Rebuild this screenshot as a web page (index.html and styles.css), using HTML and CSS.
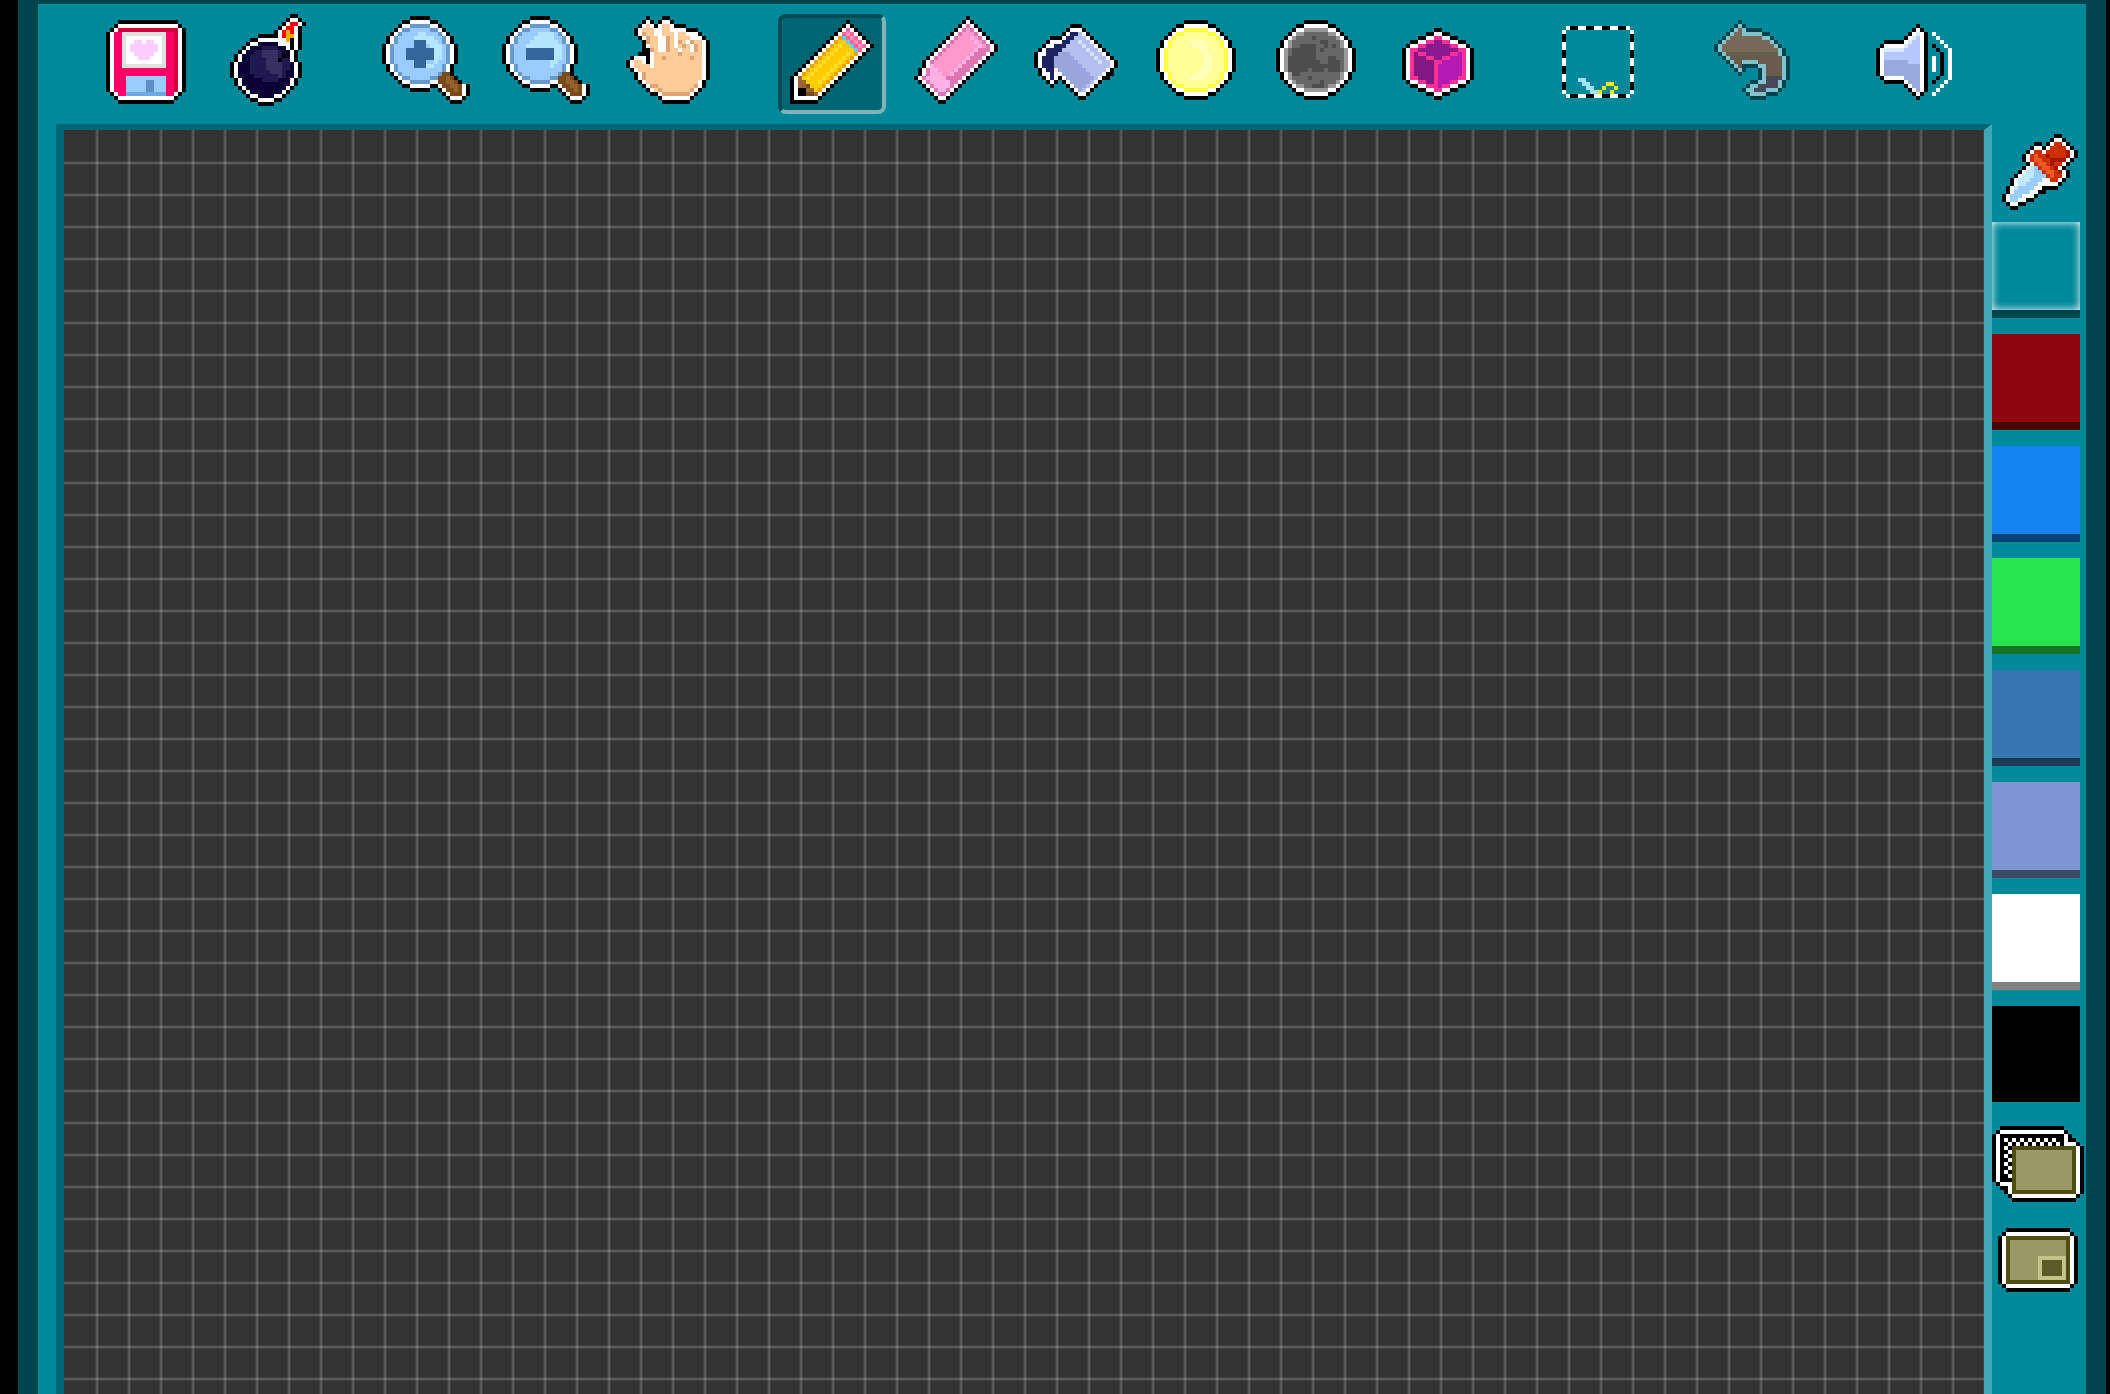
FILE: index.html
```html
<!DOCTYPE html>
<html lang="en">
<head>
<meta charset="utf-8">
<title>Pixel Paint</title>
<link rel="stylesheet" href="styles.css">
</head>
<body>
<main class="frame">
  <header class="toolbar">
    <div class="group">
      <button class="tool" type="button" aria-label="Save">
        <svg class="icon" viewBox="-3 -1 25 23">
          <path stroke="#000" d="M3 0h15M2 1h17M1 2h19M1 18h18M2 19h16M3 20h14"/>
          <rect y="2.5" width="20" height="15"/>
          <path stroke="#fff" d="M3 1h15M2 2h17M2 18h16M3 19h14"/>
          <rect x="1" y="2.5" width="18" height="15" fill="#fff"/>
          <rect x="2" y="2.5" width="16" height="15" fill="#f06"/>
          <path stroke="#f06" d="M3 18h14"/>
          <path stroke="#d10036" d="M3 2h15"/>
          <rect x="17" y="2.5" width="1" height="15" fill="#d10036"/>
          <rect x="4" y="2.5" width="11" height="9" fill="#dfe2df"/>
          <rect x="5" y="3.5" width="9" height="7" fill="#fff"/>
          <path stroke="#fcf" d="M7 5h2M10 5h2M6 6h7M6 7h7M7 8h5M8 9h3"/>
          <rect x="5" y="13.5" width="10" height="5" fill="#9cf"/>
          <path stroke="#70a8e0" d="M5 18h10"/>
          <rect x="10" y="14.5" width="2" height="3" fill="#5b90c4"/>
        </svg>
      </button>
      <button class="tool" type="button" aria-label="Clear">
        <svg class="icon" viewBox="-4 0.5 25 23">
          <path stroke="#000" d="M15 0h2M14 1h4M13 2h6M12 3h6M11 4h7M7 5h11M5 6h13M4 7h14M3 8h15M2 9h15M1 10h16M1 11h16M0 12h18M0 13h18M0 14h18M0 15h18M1 16h16M1 17h16M2 18h14M3 19h12M4 20h10M5 21h8M7 22h4"/>
          <path stroke="#fff" d="M15 1h2M14 2h4M13 3h4M12 4h5M12 5h5M7 6h10M5 7h12M4 8h13M3 9h13M2 10h14M2 11h14M1 12h16M1 13h16M1 14h16M1 15h16M2 16h14M2 17h14M3 18h12M4 19h10M5 20h8M7 21h4"/>
          <path stroke="#0b0033" d="M7 7h5M5 8h9M4 9h10M3 10h12M3 11h12M2 12h14M2 13h14M2 14h14M2 15h14M3 16h12M3 17h12M4 18h10M5 19h8M7 20h4"/>
          <path stroke="#1f1a4d" d="M8 8h4M6 9h7M5 10h9M5 11h10M5 12h10M5 13h10M5 14h9M6 15h8M8 16h4"/>
          <path stroke="#35305f" d="M8 9h4M8 10h4M9 11h4M9 12h4M9 13h4M10 14h3M12 15h1"/>
          <path stroke="#000" d="M14 9h1M13 10h1M12 11h1M15 6h1M15 7h1M15 8h1"/>
          <path stroke="red" d="M15 2h2M14 3h2M13 4h3M13 5h1"/>
          <path stroke="#fa0" d="M14 4h1M14 5h2M14 6h1"/>
        </svg>
      </button>
    </div>
    <div class="group">
      <button class="tool" type="button" aria-label="Zoom in">
        <svg class="icon" viewBox="-1 0 25 23">
          <path stroke="#000" d="M7 0h5M5 1h9M4 2h11M3 3h13M2 4h15M1 5h17M1 6h17M0 7h19M0 8h19M0 9h19M0 10h19M0 11h19M1 12h17M1 13h17M2 14h16M3 15h16M4 16h16M5 17h9M13 17h9M7 18h5M14 18h8M15 19h7M16 20h5M17 21h3"/>
          <path stroke="#fff" d="M7 1h5M5 2h9M4 3h11M3 4h13M2 5h15M2 6h15M1 7h17M1 8h17M1 9h17M1 10h17M1 11h17M2 12h15M2 13h15M3 14h14M4 15h14M5 16h14M7 17h5M14 17h7M15 18h6M16 19h5M17 20h3"/>
          <path stroke="#69c" d="M7 2h5M5 3h9M4 4h11M3 5h13M3 6h13M2 7h15M2 8h15M2 9h15M2 10h15M2 11h15M3 12h13M3 13h13M4 14h11M5 15h9M7 16h5"/>
          <path stroke="#9cf" d="M7 3h5M5 4h9M4 5h11M4 6h11M3 7h13M3 8h13M3 9h13M3 10h13M3 11h13M4 12h11M4 13h11M5 14h9M7 15h5"/>
          <path stroke="#b3e6ff" d="M9 4h2M8 5h5M11 6h3M12 7h3M13 8h2M13 9h2M13 10h2M13 11h1M11 12h2"/>
          <path stroke="#369" d="M8 6h3M8 7h3M6 8h7M6 9h7M6 10h7M8 11h3M8 12h3"/>
          <path stroke="#7a4a18" d="M15 14h2M14 15h4M14 16h5M15 17h5M16 18h4M17 19h3"/>
          <path stroke="#96622c" d="M16 15h1M16 16h2M17 17h2M18 18h1"/>
        </svg>
      </button>
      <button class="tool" type="button" aria-label="Zoom out">
        <svg class="icon" viewBox="-1 0 25 23">
          <path stroke="#000" d="M7 0h5M5 1h9M4 2h11M3 3h13M2 4h15M1 5h17M1 6h17M0 7h19M0 8h19M0 9h19M0 10h19M0 11h19M1 12h17M1 13h17M2 14h16M3 15h16M4 16h16M5 17h9M13 17h9M7 18h5M14 18h8M15 19h7M16 20h5M17 21h3"/>
          <path stroke="#fff" d="M7 1h5M5 2h9M4 3h11M3 4h13M2 5h15M2 6h15M1 7h17M1 8h17M1 9h17M1 10h17M1 11h17M2 12h15M2 13h15M3 14h14M4 15h14M5 16h14M7 17h5M14 17h7M15 18h6M16 19h5M17 20h3"/>
          <path stroke="#69c" d="M7 2h5M5 3h9M4 4h11M3 5h13M3 6h13M2 7h15M2 8h15M2 9h15M2 10h15M2 11h15M3 12h13M3 13h13M4 14h11M5 15h9M7 16h5"/>
          <path stroke="#9cf" d="M7 3h5M5 4h9M4 5h11M4 6h11M3 7h13M3 8h13M3 9h13M3 10h13M3 11h13M4 12h11M4 13h11M5 14h9M7 15h5"/>
          <path stroke="#b3e6ff" d="M9 4h4M8 5h5M7 6h7M6 7h9M13 8h2M13 9h2M13 10h2M12 11h2M12 12h1"/>
          <path stroke="#369" d="M6 8h7M6 9h7M6 10h7"/>
          <path stroke="#7a4a18" d="M15 14h2M14 15h4M14 16h5M15 17h5M16 18h4M17 19h3"/>
          <path stroke="#96622c" d="M16 15h1M16 16h2M17 17h2M18 18h1"/>
        </svg>
      </button>
      <button class="tool" type="button" aria-label="Pan">
        <svg class="icon" viewBox="-2 0 25 23">
          <path stroke="#000" d="M5 0h1M9 0h2M4 1h3M8 1h4M3 2h12M2 3h16M2 4h17M3 5h17M4 6h17M4 7h17M4 8h17M3 9h18M1 10h20M0 11h21M0 12h21M1 13h20M2 14h19M2 15h19M3 16h17M4 17h16M5 18h14M6 19h12M8 20h9M9 21h7"/>
          <path stroke="#fff" d="M5 1h1M9 1h2M4 2h3M8 2h4M3 3h12M3 4h15M4 5h15M5 6h15M5 7h15M6 8h14M6 9h14M2 10h3M6 10h14M1 11h4M6 11h14M1 12h19M2 13h18M3 14h17M3 15h17M4 16h15M5 17h14M6 18h12M8 19h9M9 20h7"/>
          <path stroke="#fc9" d="M5 2h1M9 2h2M4 3h3M9 3h2M4 4h3M9 4h3M13 4h2M5 5h3M10 5h2M13 5h3M5 6h3M10 6h2M13 6h2M16 6h3M6 7h2M10 7h2M13 7h3M17 7h2M6 8h2M10 8h3M14 8h2M17 8h2M7 9h12M7 10h12M2 11h2M7 11h12M2 12h4M7 12h12M3 13h16M4 14h15M4 15h15M5 16h13M6 17h12M7 18h10M9 19h7"/>
          <path stroke="#e0a472" d="M4 4h1M5 5h1M5 6h1M6 8h1M10 5h1M10 6h1M10 7h1M10 8h1M13 6h1M14 7h1M16 6h1M17 7h1M17 8h1M13 9h1M9 10h1M16 10h1M4 14h1M4 15h1M6 17h2M8 18h1M9 19h7M16 18h1M17 17h1"/>
        </svg>
      </button>
    </div>
    <div class="group">
      <button class="tool selected" type="button" aria-label="Pencil" aria-pressed="true">
        <svg class="icon" viewBox="-2 -1 25 23">
          <path stroke="#000" d="M14 0h1M13 1h3M12 2h5M11 3h7M10 4h9M9 5h11M8 6h13M7 7h13M6 8h13M5 9h13M4 10h13M3 11h13M2 12h13M1 13h13M0 14h13M0 15h12M0 16h11M0 17h10M0 18h9M0 19h8M0 20h7"/>
          <path stroke="#fff" d="M14 1h1M13 2h3M12 3h5M11 4h7M10 5h9M9 6h11M8 7h11M7 8h11M6 9h11M5 10h11M4 11h11M3 12h11M2 13h11M1 14h11M1 15h10M1 16h9M1 17h8M1 18h7M1 19h6"/>
          <path stroke="#fc0" d="M12 4h1M11 5h3M10 6h5M9 7h7M8 8h9M7 9h9M6 10h9M5 11h9M4 12h9M3 13h9M2 14h9M2 15h8M2 16h7M2 17h6M2 18h5"/>
          <path stroke="#e8a400" d="M12 4h1M11 5h1M10 6h1M9 7h1M8 8h1M7 9h1M6 10h1M5 11h1M4 12h1M3 13h1M16 8h1M15 9h1M14 10h1M13 11h1M12 12h1M11 13h1M10 14h1M9 15h1M8 16h1M7 17h1"/>
          <path stroke="#ffdc28" d="M12 6h1M11 7h1M10 8h1M9 9h1M8 10h1M7 11h1M6 12h1M5 13h1M4 14h1M14 8h1M13 9h1M12 10h1M11 11h1M10 12h1M9 13h1M8 14h1M7 15h1"/>
          <path stroke="#f69" d="M14 2h1M13 3h3M14 4h3M15 5h3M16 6h3M17 7h1"/>
          <path stroke="#ff8cba" d="M14 3h1M15 4h1M16 5h1M17 6h1"/>
          <path stroke="#6cf" d="M13 4h1M14 5h1M15 6h1M16 7h1"/>
          <path stroke="#963" d="M2 14h1M2 15h2M2 16h3M4 17h2M5 18h2"/>
          <path stroke="#7a4a1a" d="M4 16h1M4 18h2"/>
          <path stroke="#000" d="M2 17h2M2 18h2"/>
        </svg>
      </button>
      <button class="tool" type="button" aria-label="Eraser">
        <svg class="icon" viewBox="-3 0 25 23">
          <path stroke="#000" d="M13 0h1M12 1h3M11 2h5M10 3h7M9 4h9M8 5h11M7 6h13M6 7h15M5 8h16M4 9h16M3 10h16M2 11h16M2 12h15M1 13h15M1 14h14M0 15h14M1 16h12M2 17h10M3 18h8M4 19h6M5 20h4M6 21h2"/>
          <path stroke="#fff" d="M13 1h1M12 2h3M11 3h5M10 4h7M9 5h9M8 6h11M7 7h13M6 8h14M5 9h14M4 10h14M3 11h14M3 12h13M2 13h13M2 14h12M1 15h12M2 16h10M3 17h8M4 18h6M5 19h4M6 20h2"/>
          <path stroke="#df76b2" d="M13 2h1M12 3h3M11 4h5M10 5h7M9 6h9M8 7h11M7 8h12M6 9h12M5 10h12M4 11h12M4 12h11M3 13h11M3 14h10M2 15h10M3 16h8M4 17h6M5 18h4M6 19h2"/>
          <path stroke="#f9c" d="M13 3h1M12 4h3M11 5h5M10 6h7M9 7h9M8 8h8M7 9h8M6 10h8M5 11h8M5 12h7M4 13h7M4 14h6"/>
          <path stroke="#ffb0e4" d="M14 5h1M15 6h1M16 7h1M15 8h1M14 9h1M13 10h1M12 11h1M11 12h1M10 13h1M9 14h1M4 12h1M4 13h2M4 14h3M3 15h5M4 16h5M5 17h4M6 18h2"/>
        </svg>
      </button>
      <button class="tool" type="button" aria-label="Fill">
        <svg class="icon" viewBox="-3 -2 25 23">
          <path stroke="#000" d="M9 0h3M8 1h5M7 2h7M4 3h11M3 4h13M2 5h15M1 6h17M0 7h19M0 8h20M0 9h21M0 10h21M1 11h19M1 12h19M2 13h17M3 14h3M7 14h10M4 15h1M8 15h8M9 16h6M10 17h4M11 18h2"/>
          <path stroke="#fff" d="M9 1h3M8 2h5M7 3h7M4 4h11M3 5h13M2 6h15M1 7h17M1 8h18M1 9h19M1 10h19M2 11h17M2 12h4M6 12h12M3 13h3M7 13h10M4 14h1M8 14h8M9 15h6M10 16h4M11 17h2"/>
          <path stroke="#b3bfee" d="M10 2h2M10 3h3M9 4h5M8 5h7M7 6h9M5 7h12M5 8h13M5 9h14M5 10h14M6 11h12M7 12h10M8 13h8M9 14h6M10 15h4M11 16h2"/>
          <path stroke="#99a5dc" d="M6 7h3M5 8h5M5 9h6M5 10h7M6 11h7M7 12h7M8 13h7M9 14h5M10 15h3M11 16h1"/>
          <path stroke="#d3e0ff" d="M11 4h1M12 5h1M13 6h1M14 7h1M15 8h1M16 9h1"/>
          <path stroke="#1b2461" d="M9 2h2M8 3h2M7 4h2M5 5h3M3 6h4M3 7h3M2 8h3M2 9h3M2 10h3M3 11h2M4 12h1M4 13h1"/>
        </svg>
      </button>
      <button class="tool" type="button" aria-label="Lighten">
        <svg class="icon" viewBox="-3.5 -1 25 23">
          <path stroke="#000" d="M7 0h6M5 1h10M4 2h12M3 3h14M2 4h16M1 5h18M1 6h18M0 7h20M0 8h20M0 9h20M0 10h20M0 11h20M0 12h20M1 13h18M1 14h18M2 15h16M3 16h14M4 17h12M5 18h10M7 19h6"/>
          <path stroke="#fff" d="M7 1h6M5 2h10M4 3h12M3 4h14M2 5h16M2 6h16M1 7h18M1 8h18M1 9h18M1 10h18M1 11h18M1 12h18M2 13h16M2 14h16M3 15h14M4 16h12M5 17h10M7 18h6"/>
          <path stroke="#ffff40" d="M7 2h6M5 3h10M4 4h12M3 5h14M3 6h14M2 7h16M2 8h16M2 9h16M2 10h16M2 11h16M2 12h16M3 13h14M3 14h14M4 15h12M5 16h10M7 17h6"/>
          <path stroke="#ff9" d="M7 3h6M5 4h10M4 5h12M4 6h12M3 7h14M3 8h14M3 9h14M3 10h14M3 11h14M3 12h14M4 13h12M4 14h12M5 15h10M7 16h6"/>
          <path stroke="#ffffb8" d="M8 5h4M9 6h4M11 7h2M12 8h2M12 9h2M12 10h2M12 11h2M11 12h3M10 13h3M8 14h4"/>
        </svg>
      </button>
      <button class="tool" type="button" aria-label="Darken">
        <svg class="icon" viewBox="-3.5 -1 25 23">
          <path stroke="#000" d="M7 0h6M5 1h10M4 2h12M3 3h14M2 4h16M1 5h18M1 6h18M0 7h20M0 8h20M0 9h20M0 10h20M0 11h20M0 12h20M1 13h18M1 14h18M2 15h16M3 16h14M4 17h12M5 18h10M7 19h6"/>
          <path stroke="#fff" d="M7 1h6M5 2h10M4 3h12M3 4h14M2 5h16M2 6h16M1 7h18M1 8h18M1 9h18M1 10h18M1 11h18M1 12h18M2 13h16M2 14h16M3 15h14M4 16h12M5 17h10M7 18h6"/>
          <path stroke="#999" d="M7 2h6M5 3h10M4 4h12M3 5h14M3 6h14M2 7h16M2 8h16M2 9h16M2 10h16M2 11h16M2 12h16M3 13h14M3 14h14M4 15h12M5 16h10M7 17h6"/>
          <path stroke="#666" d="M7 3h6M5 4h10M4 5h12M4 6h12M3 7h14M3 8h14M3 9h14M3 10h14M3 11h14M3 12h14M4 13h12M4 14h12M5 15h10M7 16h6"/>
          <path stroke="#4d4d4d" d="M9 4h1M11 5h2M6 6h4M12 6h1M14 6h1M4 7h6M11 7h1M4 8h6M3 9h7M13 9h2M3 10h8M13 10h3M3 11h13M3 12h5M9 12h3M13 12h3M4 13h2M8 14h1M11 15h1M9 16h3"/>
        </svg>
      </button>
      <button class="tool" type="button" aria-label="3D preview">
        <svg class="icon" viewBox="-5 -3 25 23">
          <path stroke="#000" d="M8 0h2M6 1h6M4 2h10M2 3h14M1 4h16M0 5h18M0 6h18M0 7h18M0 8h18M0 9h18M0 10h18M0 11h18M0 12h18M1 13h16M2 14h14M4 15h10M6 16h6M8 17h2"/>
          <path stroke="#fff" d="M8 1h2M6 2h6M4 3h10M2 4h14M1 5h16M1 6h16M1 7h16M1 8h16M1 9h16M1 10h16M1 11h16M1 12h16M2 13h14M4 14h10M6 15h6M8 16h2"/>
          <path stroke="#ff2f97" d="M8 2h2M6 3h6M4 4h10M2 5h14M2 6h14M2 7h14M2 8h14M2 9h14M2 10h14M2 11h14M2 12h14M4 13h10M6 14h6M8 15h2"/>
          <path stroke="#8a1a8f" d="M8 3h2M6 4h6M4 5h10M6 6h6M8 7h2"/>
          <path stroke="#801a80" d="M3 6h1M3 7h3M3 8h5M3 9h5M3 10h5M3 11h5M4 12h4M6 13h2"/>
          <path stroke="#b31ab3" d="M14 6h1M12 7h3M10 8h5M9 9h6M9 10h6M9 11h6M9 12h5M9 13h3M9 14h1"/>
        </svg>
      </button>
    </div>
    <div class="group">
      <button class="tool" type="button" aria-label="Select and cut">
        <svg class="icon" viewBox="-4 -2.5 25 23">
          <path stroke="#000" d="M2 0h2M6 0h2M10 0h2M14 0h2M2 17h2M6 17h2M10 17h2M14 17h2M.5 1.5v2M.5 5.5v2M.5 9.5v2M.5 13.5v2M17.5 1.5v2M17.5 5.5v2M17.5 9.5v2M17.5 13.5v2"/>
          <path stroke="#fff" d="M1 0h1M4 0h2M8 0h2M12 0h2M16 0h1M1 17h1M4 17h2M8 17h2M12 17h2M16 17h1M.5 .5v1M.5 3.5v2M.5 7.5v2M.5 11.5v2M.5 15.5v1M17.5 .5v1M17.5 3.5v2M17.5 7.5v2M17.5 11.5v2M17.5 15.5v1"/>
          <path stroke="#a6e2ff" d="M4 13h2M5 14h2M6 15h2M7 16h2"/>
          <path stroke="#ffea00" d="M11 14h2M10 15h1M13 15h1M9 16h1M12 16h1"/>
        </svg>
      </button>
    </div>
    <div class="group">
      <button class="tool" type="button" aria-label="Undo" disabled>
        <svg class="icon" viewBox="-1 -1 25 23">
          <path stroke="#000" d="M6 0h1M5 1h3M4 2h8M3 3h11M2 4h13M1 5h15M0 6h17M0 7h18M1 8h17M2 9h17M3 10h16M4 11h15M5 12h3M11 12h8M6 13h1M11 13h8M11 14h8M9 15h9M8 16h10M7 17h10M8 18h8M9 19h4"/>
          <path stroke="#fff" d="M6 1h1M5 2h3M4 3h8M3 4h11M2 5h13M1 6h15M1 7h16M2 8h15M3 9h15M4 10h14M5 11h2M11 11h7M6 12h1M12 12h6M12 13h6M12 14h6M11 15h6M9 16h8M8 17h8M9 18h4"/>
          <path stroke="#f04c19" d="M6 2h1M5 3h2M4 4h8M3 5h11M2 6h13M2 7h14"/>
          <path stroke="#cc3000" d="M3 8h13M4 9h13M5 10h2M11 10h6M6 11h1M13 11h4M13 12h4M13 13h4"/>
          <path stroke="#900c18" d="M13 14h4M13 15h3M11 16h5M10 17h3"/>
        </svg>
      </button>
    </div>
    <div class="group">
      <button class="tool" type="button" aria-label="Sound">
        <svg class="icon" viewBox="-0.5 -2 25 23">
          <path stroke="#000" d="M10 0h1M9 1h3M8 2h5M7 3h6M2 4h11M1 5h12M0 6h13M0 7h13M0 8h13M0 9h13M0 10h13M0 11h13M0 12h13M1 13h12M2 14h11M7 15h6M8 16h5M9 17h3M10 18h1M14 5h1M15 6h1M15 13h1M14 14h1M16.5 6.5v6"/>
          <path stroke="#fff" d="M10 1h1M9 2h3M8 3h4M7 4h5M2 5h10M1 6h11M1 7h11M1 8h11M1 9h11M1 10h11M1 11h11M1 12h11M2 13h10M7 14h5M8 15h4M9 16h3M10 17h1M14.5 7.5v4M14 2h1M15 3h1M16 4h1M17 5h1M18.5 5.5v8M17 14h1M16 15h1M15 16h1M14 17h1"/>
          <path stroke="#b6c8ff" d="M10 2h1M9 3h2M8 4h3M7 5h4M2 6h9M2 7h9M2 8h9M8 9h3"/>
          <path stroke="#dceaff" d="M10 2h1M9 3h1M8 4h1M7 5h1M2 6h5"/>
          <path stroke="#99aadf" d="M2 9h6M2 10h9M2 11h9M2 12h9M7 13h4M8 14h3M9 15h2M10 16h1"/>
        </svg>
      </button>
    </div>
  </header>
  <section class="workspace">
    <div class="canvas" role="img" aria-label="Drawing canvas"></div>
    <aside class="palette">
      <button class="side-tool dropper" type="button" aria-label="Pick colour">
        <svg class="icon" viewBox="0 -0.5 19 19">
          <path stroke="#000" d="M13 0h2M12 1h4M8 2h2M11 2h6M7 3h11M6 4h13M5 5h14M5 6h13M6 7h11M5 8h11M4 9h13M3 10h14M2 11h14M2 12h13M1 13h13M1 14h10M0 15h9M0 16h8M1 17h5M2 18h2"/>
          <path stroke="#fff" d="M13 1h2M12 2h4M8 3h2M11 3h6M7 4h11M6 5h12M6 6h11M7 7h9M6 8h9M5 9h11M4 10h12M3 11h12M3 12h11M2 13h8M2 14h7M1 15h7M1 16h5M2 17h2"/>
          <path stroke="#cc3000" d="M13 2h2M12 3h4M8 4h2M11 4h6M7 5h10M7 6h9M8 7h7M9 8h5M10 9h5M11 10h4M12 11h2"/>
          <path stroke="#ec5a22" d="M8 5h1M8 6h2M9 7h2M10 8h2M11 9h2M12 10h1"/>
          <path stroke="#a81400" d="M16 4h1M16 5h1M11 5h1M12 6h4M12 7h1M13 8h1M14 9h1"/>
          <path stroke="#9cf" d="M7 8h2M6 9h4M5 10h6M4 11h6M4 12h5M3 13h5M3 14h4M2 15h3M2 16h2"/>
          <path stroke="#bdeaff" d="M7 8h1M6 9h2M5 10h3M4 11h3M4 12h2M3 13h1"/>
        </svg>
      </button>
      <div class="swatches">
        <button class="swatch teal" type="button" aria-label="Teal" aria-pressed="true"></button>
        <button class="swatch maroon" type="button" aria-label="Maroon"></button>
        <button class="swatch blue" type="button" aria-label="Blue"></button>
        <button class="swatch green" type="button" aria-label="Green"></button>
        <button class="swatch steel" type="button" aria-label="Steel blue"></button>
        <button class="swatch lavender" type="button" aria-label="Lavender"></button>
        <button class="swatch white" type="button" aria-label="White"></button>
        <button class="swatch black" type="button" aria-label="Black"></button>
      </div>
      <button class="side-tool layers" type="button" aria-label="Layers">
        <svg class="icon" viewBox="0 0 23 19">
          <path d="M2 0h16v1h1v1h1v1h1v1h1v1h1v12h-1v1h-1v1H5v-1H4v-1H3v-1H2v-1H1v-1H0V2h1V1h1z"/>
          <path fill="#fff" d="M2 1h16v1h1v2h2v1h1v12h-1v1H5v-1H4v-2H2v-1H1V2h1z"/>
          <path d="M2 2h16v3H5v9H2z"/>
          <path fill="#fff" d="M3 3h1v1H3zM5 3h1v1H5zM7 3h1v1H7zM9 3h1v1H9zM11 3h1v1h-1zM13 3h1v1h-1zM15 3h1v1h-1zM4 4h1v1H4zM6 4h1v1H6zM8 4h1v1H8zM10 4h1v1h-1zM12 4h1v1h-1zM14 4h1v1h-1zM16 4h1v1h-1zM3 5h1v1H3zM4 6h1v1H4zM3 7h1v1H3zM4 8h1v1H4zM3 9h1v1H3zM4 10h1v1H4zM3 11h1v1H3zM4 12h1v1H4z"/>
          <path fill="#4d4d14" d="M5 5h16v12H5z"/>
          <path fill="#996" d="M6 6h14v10H6z"/>
        </svg>
      </button>
      <button class="side-tool minimap" type="button" aria-label="Preview window">
        <svg class="icon" viewBox="0 0 20 16">
          <path d="M2 0h16v1h1v1h1v12h-1v1h-1v1H2v-1H1v-1H0V2h1V1h1z"/>
          <path fill="#fff" d="M2 1h16v1h1v12h-1v1H2v-1H1V2h1z"/>
          <path fill="#4d4d14" d="M2 2h16v12H2z"/>
          <path fill="#996" d="M3 3h14v10H3z"/>
          <path fill="#c3c38c" d="M10 7h7v6h-7z"/>
          <path fill="#5c5c29" d="M11 8h5v4h-5z"/>
        </svg>
      </button>
    </aside>
  </section>
</main>
</body>
</html>
```
FILE: styles.css
```css
:root {
  --teal: #00889b;
  --teal-dark: #00444d;
  --teal-shade: #006674;
  --teal-light: #40a6b4;
  --line: rgba(255, 255, 255, 0.18);
  --line-edge: rgba(255, 255, 255, 0.07);
}

* {
  box-sizing: border-box;
}

body {
  margin: 0;
  background: #000;
  font-family: "Liberation Sans", sans-serif;
}

button {
  margin: 0;
  padding: 0;
  border: 0;
  background: none;
  cursor: pointer;
}

.frame {
  display: flex;
  flex-direction: column;
  min-height: 100vh;
  margin: 0 4px 0 18px;
  border: solid var(--teal-dark);
  border-width: 4px 20px 0;
  background: var(--teal);
}

.toolbar {
  display: flex;
  gap: 56px;
  padding: 10px 0 10px 52px;
}

.group {
  display: flex;
  gap: 12px;
}

.tool {
  flex: none;
  width: 108px;
  height: 100px;
  border: 4px solid transparent;
  border-radius: 8px;
}

.tool:disabled {
  opacity: 0.5;
}

.tool.selected {
  border-color: #004d57 #80b3ba #80b3ba #004d57;
  background: var(--teal-shade);
}

.icon {
  display: block;
  width: 100%;
  height: 100%;
  overflow: visible;
  shape-rendering: crispEdges;
}

.workspace {
  display: flex;
  flex: 1;
  padding: 0 6px 0 18px;
}

.canvas {
  display: grid;
  flex: 1;
  border: solid;
  border-color: var(--teal-shade) var(--teal-light);
  border-width: 6px 8px 0;
  border-left-color: var(--teal-shade);
  background: #333;
}

/* Column lines and row lines share one cell; each starts one square in. */
.canvas::before,
.canvas::after {
  content: "";
  grid-area: 1 / 1;
  background-size: 32px 32px;
}

.canvas::before {
  margin-left: 31px;
  background-image: linear-gradient(to right, var(--line-edge) 1px, var(--line) 1px 3px, var(--line-edge) 3px 4px, transparent 4px);
}

.canvas::after {
  margin-top: 31px;
  background-image: linear-gradient(to bottom, var(--line-edge) 1px, var(--line) 1px 3px, var(--line-edge) 3px 4px, transparent 4px);
}

.palette {
  width: 88px;
}

.side-tool {
  display: block;
}

.dropper {
  width: 96px;
  padding: 10px 10px 12px;
}

.swatches {
  display: flex;
  flex-direction: column;
  gap: 16px;
}

.swatch {
  height: 96px;
  border-bottom: 8px solid;
}

.teal {
  border-color: var(--teal-dark);
  background: var(--teal);
  box-shadow: inset 0 0 8px #fff;
}

.maroon {
  border-color: #470306;
  background: #8e070c;
}

.blue {
  border-color: #0a4278;
  background: #1584f0;
}

.green {
  border-color: #147227;
  background: #28e44e;
}

.steel {
  border-color: #1b3b58;
  background: #3676b0;
}

.lavender {
  border-color: #3e4a68;
  background: #7c94d0;
}

.white {
  border-color: #808080;
  background: #fff;
}

.black {
  border-color: #000;
  background: #000;
}

.layers {
  width: 92px;
  margin-top: 24px;
}

.minimap {
  width: 80px;
  margin: 26px 0 0 6px;
}
```
